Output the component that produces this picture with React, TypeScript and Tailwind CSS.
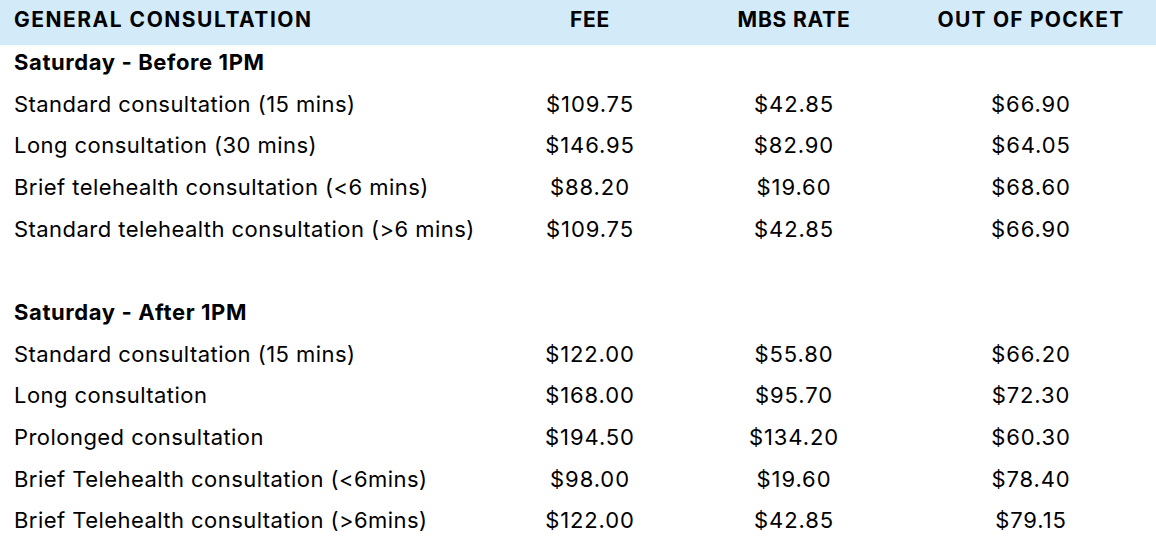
import React from "react";

type Row = [string, string, string, string];

const before: Row[] = [
  ["Standard consultation (15 mins)", "$109.75", "$42.85", "$66.90"],
  ["Long consultation (30 mins)", "$146.95", "$82.90", "$64.05"],
  ["Brief telehealth consultation (<6 mins)", "$88.20", "$19.60", "$68.60"],
  ["Standard telehealth consultation (>6 mins)", "$109.75", "$42.85", "$66.90"],
];

const after: Row[] = [
  ["Standard consultation (15 mins)", "$122.00", "$55.80", "$66.20"],
  ["Long consultation", "$168.00", "$95.70", "$72.30"],
  ["Prolonged consultation", "$194.50", "$134.20", "$60.30"],
  ["Brief Telehealth consultation (<6mins)", "$98.00", "$19.60", "$78.40"],
  ["Brief Telehealth consultation (>6mins)", "$122.00", "$42.85", "$79.15"],
];

const grid = "grid grid-cols-[498px_184px_224px_250px]";

function DataRow({ r }: { r: Row }) {
  return (
    <div className={`${grid} h-[41.7px] items-center text-[22px] leading-none text-black`}>
      <div className="pl-[14px] whitespace-nowrap tracking-[0.45px]">{r[0]}</div>
      <div className="text-center tracking-[0.9px]">{r[1]}</div>
      <div className="text-center tracking-[0.9px]">{r[2]}</div>
      <div className="text-center tracking-[0.9px]">{r[3]}</div>
    </div>
  );
}

function Section({ title, rows }: { title: string; rows: Row[] }) {
  return (
    <div>
      <div className="h-[41.7px] flex items-center pl-[14px] text-[22px] leading-none font-bold text-black tracking-[0.6px]">
        {title}
      </div>
      {rows.map((r, i) => (
        <DataRow key={i} r={r} />
      ))}
    </div>
  );
}

export default function App() {
  return (
    <div
      className="w-[1156px] h-[546px] bg-white overflow-hidden"
      style={{ fontFamily: "Inter, 'Noto Sans', sans-serif" }}
    >
      <div className={`${grid} h-[45px] bg-[#d3ebf8] items-center text-[21px] leading-none font-bold text-black pb-[6px]`}>
        <div className="pl-[14px] tracking-[1.5px]">GENERAL CONSULTATION</div>
        <div className="text-center tracking-[0.8px]">FEE</div>
        <div className="text-center tracking-[0.8px]">MBS RATE</div>
        <div className="text-center tracking-[1.2px]">OUT OF POCKET</div>
      </div>
      <div className="-mt-[4px]">
        <Section title="Saturday - Before 1PM" rows={before} />
        <div className="h-[41.7px]" />
        <Section title="Saturday - After 1PM" rows={after} />
      </div>
    </div>
  );
}
